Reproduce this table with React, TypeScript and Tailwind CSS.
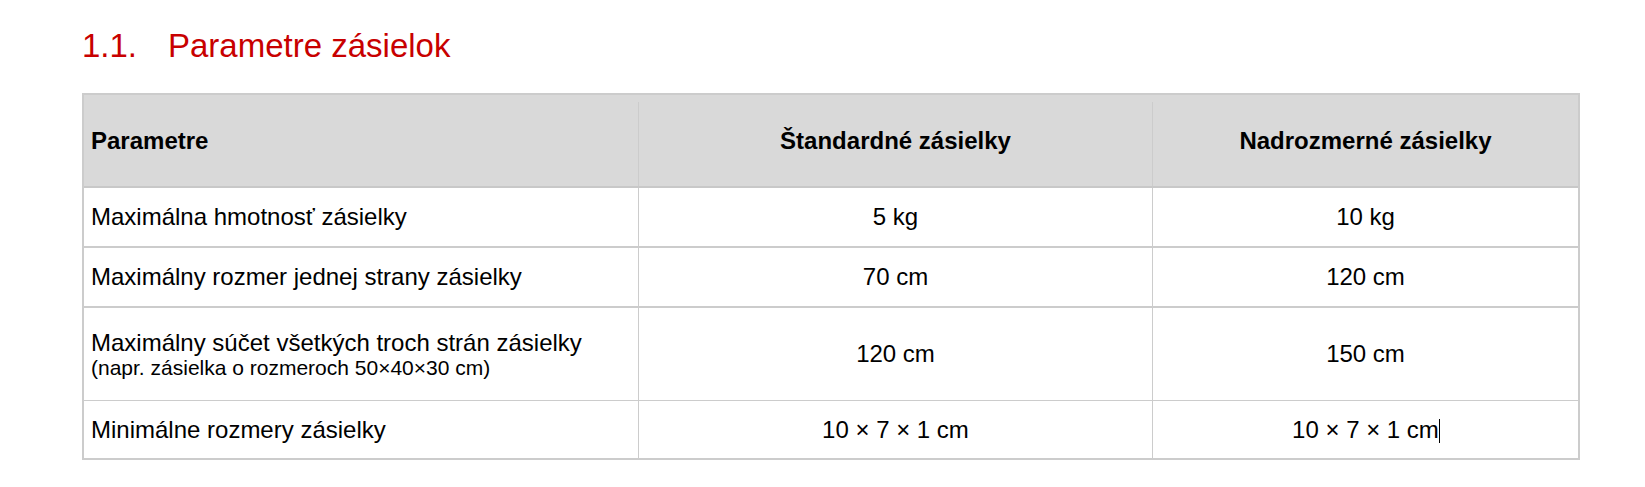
import React from "react";

type Row = {
  label: string;
  note?: string;
  standard: string;
  oversize: string;
  height: string;
  border: string;
  cursor?: boolean;
};

const rows: Row[] = [
  {
    label: "Maximálna hmotnosť zásielky",
    standard: "5 kg",
    oversize: "10 kg",
    height: "h-[60px]",
    border: "border-b-2",
  },
  {
    label: "Maximálny rozmer jednej strany zásielky",
    standard: "70 cm",
    oversize: "120 cm",
    height: "h-[60px]",
    border: "border-b-2",
  },
  {
    label: "Maximálny súčet všetkých troch strán zásielky",
    note: "(napr. zásielka o rozmeroch 50×40×30 cm)",
    standard: "120 cm",
    oversize: "150 cm",
    height: "h-[93px]",
    border: "border-b",
  },
  {
    label: "Minimálne rozmery zásielky",
    standard: "10 × 7 × 1 cm",
    oversize: "10 × 7 × 1 cm",
    height: "h-[57px]",
    border: "border-b-0",
    cursor: true,
  },
];

const App: React.FC = () => {
  return (
    <div
      className="min-h-screen bg-white pl-[82px] pt-[27px] text-black"
      style={{ fontFamily: '"Liberation Sans", Arial, sans-serif' }}
    >
      {/* Section heading */}
      <h2 className="text-[33px] leading-[38px] text-[#c80000]">
        <span className="inline-block w-[86px]">1.1.</span>
        Parametre zásielok
      </h2>

      {/* Parameters table */}
      <div className="mt-[28px] w-[1498px] border-2 border-[#cccccc]">
        {/* Header */}
        <div className="flex h-[93px] border-b-2 border-[#c8c8c8] bg-[#d9d9d9] text-[24px] font-bold">
          <div className="flex w-[554px] items-center pl-[7px]">Parametre</div>
          <div className="mt-[7px] w-px self-stretch bg-[#cccccc]" />
          <div className="flex w-[513px] items-center justify-center">
            Štandardné zásielky
          </div>
          <div className="mt-[7px] w-px self-stretch bg-[#cccccc]" />
          <div className="flex flex-1 items-center justify-center">
            Nadrozmerné zásielky
          </div>
        </div>

        {/* Body */}
        {rows.map((row) => (
          <div
            key={row.label}
            className={`grid grid-cols-[554px_514px_1fr] border-[#cccccc] text-[24px] ${row.height} ${row.border}`}
          >
            <div className="flex flex-col justify-center pl-[7px]">
              <span className="leading-[26px]">{row.label}</span>
              {row.note && (
                <span className="text-[21px] leading-[23px]">{row.note}</span>
              )}
            </div>
            <div className="flex items-center justify-center border-l border-[#cccccc]">
              {row.standard}
            </div>
            <div className="flex items-center justify-center border-l border-[#cccccc]">
              <span>
                {row.oversize}
                {row.cursor && (
                  <span className="-mr-px inline-block h-[24px] w-px bg-black align-[-5px]" />
                )}
              </span>
            </div>
          </div>
        ))}
      </div>
    </div>
  );
};

export default App;
